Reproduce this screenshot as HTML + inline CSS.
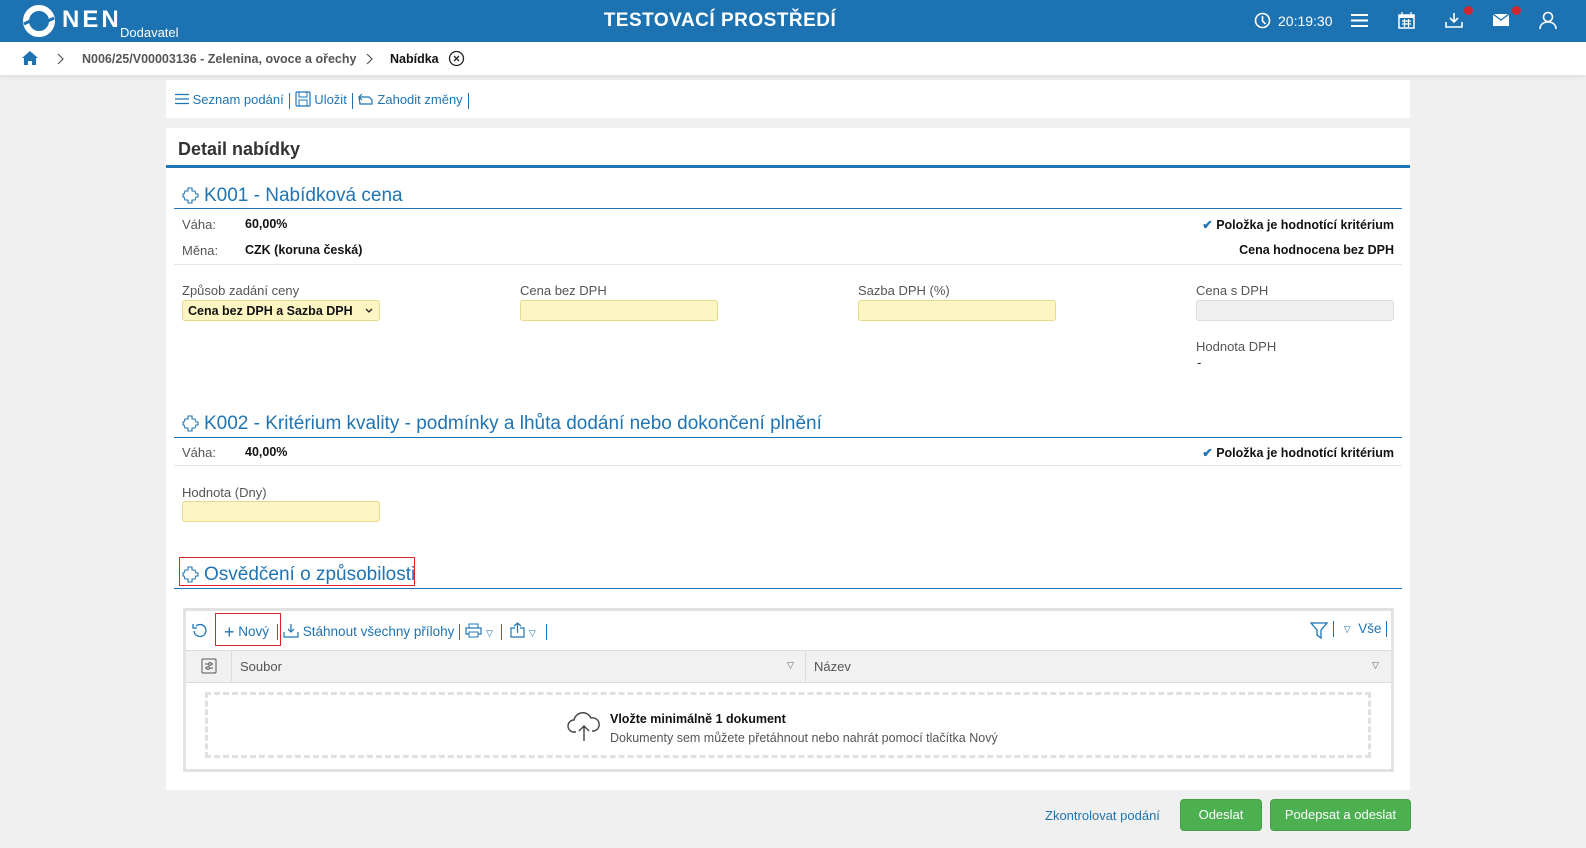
<!DOCTYPE html>
<html><head><meta charset="utf-8"><style>
*{box-sizing:border-box;margin:0;padding:0}
body{width:1586px;height:848px;background:#f0f0f0;font-family:"Liberation Sans",sans-serif;font-size:13px;color:#222;position:relative;overflow:hidden}
.a{position:absolute}
.blue{color:#1f74b3}
.lab{color:#555;font-size:13px}
.b{font-weight:bold;font-size:12.5px;color:#111}
.inp{position:absolute;height:21px;width:198px;background:#fdf6c3;border:1px solid #e6d98c;border-radius:3px}
.h2{position:absolute;color:#1f74b3;font-size:19px}
.hr{position:absolute;height:1px;background:#1f74b3}
.gl{position:absolute;height:1px;background:#e6e6e6}
.sep{display:inline-block;width:1px;height:16px;background:#1f74b3;vertical-align:middle;margin:0 5px}
</style></head><body>
<!-- header -->
<div class="a" style="left:0;top:0;width:1586px;height:42px;background:#1d73b2"></div>
<svg class="a" style="left:22px;top:4px" width="34" height="34" viewBox="0 0 34 34"><circle cx="17" cy="17" r="13" fill="none" stroke="#fff" stroke-width="6"/><path d="M2 20 L14 14 L20 20 L32 14" stroke="#1d73b2" stroke-width="3" fill="none"/></svg>
<div class="a" style="left:62px;top:6px;color:#fff;font-weight:bold;font-size:24px;letter-spacing:3px">NEN</div>
<div class="a" style="left:120px;top:25px;color:#fff;font-size:13px">Dodavatel</div>
<div class="a" style="left:0;width:1440px;top:10px;text-align:center;color:#fff;font-weight:bold;font-size:19px;letter-spacing:0.5px">TESTOVACÍ PROSTŘEDÍ</div>
<svg class="a" style="left:1254px;top:12px" width="17" height="17"><circle cx="8.5" cy="8.5" r="7" fill="none" stroke="#fff" stroke-width="1.6"/><path d="M8.5 4v5l3 3" stroke="#fff" stroke-width="1.6" fill="none"/></svg>
<div class="a" style="left:1278px;top:13px;color:#fff;font-size:14px">20:19:30</div>
<svg class="a" style="left:1351px;top:13px" width="17" height="15"><path d="M0 2h17M0 7.5h17M0 13h17" stroke="#fff" stroke-width="2"/></svg>
<svg class="a" style="left:1398px;top:12px" width="17" height="17"><rect x="1" y="3" width="15" height="13" fill="none" stroke="#fff" stroke-width="1.5"/><rect x="1" y="3" width="15" height="3" fill="#fff"/><path d="M4 0v4M13 0v4M4 9h9M4 12h9M6.5 7v8M10.5 7v8" stroke="#fff" stroke-width="1.2"/></svg>
<svg class="a" style="left:1445px;top:12px" width="18" height="17"><path d="M9 1v9M5 6l4 4 4-4M1 10v5h16v-5" stroke="#fff" stroke-width="1.6" fill="none"/></svg>
<div class="a" style="left:1464px;top:6px;width:9px;height:9px;border-radius:50%;background:#d0282d"></div>
<svg class="a" style="left:1492px;top:13px" width="18" height="14"><rect x="1" y="1" width="16" height="12" fill="#fff"/><path d="M1 1l8 6 8-6" stroke="#1d73b2" stroke-width="1.3" fill="none"/></svg>
<div class="a" style="left:1512px;top:6px;width:9px;height:9px;border-radius:50%;background:#d0282d"></div>
<svg class="a" style="left:1539px;top:11px" width="18" height="19"><circle cx="9" cy="6" r="4.5" fill="none" stroke="#fff" stroke-width="1.6"/><path d="M1 18c0-5 4-7 8-7s8 2 8 7" stroke="#fff" stroke-width="1.6" fill="none"/></svg>
<!-- breadcrumb -->
<div class="a" style="left:0;top:42px;width:1586px;height:33px;background:#fff;box-shadow:0 2px 4px rgba(0,0,0,.08)"></div>
<svg class="a" style="left:21px;top:50px" width="18" height="16"><path d="M9 1L1 8h2v7h4v-4h4v4h4V8h2z" fill="#1d73b2"/></svg>
<svg class="a" style="left:57px;top:53px" width="8" height="12"><path d="M1 1l5 5-5 5" stroke="#555" fill="none" stroke-width="1.2"/></svg>
<div class="a" style="left:82px;top:52px;font-weight:bold;font-size:12.5px;color:#555">N006/25/V00003136 - Zelenina, ovoce a ořechy</div>
<svg class="a" style="left:366px;top:53px" width="8" height="12"><path d="M1 1l5 5-5 5" stroke="#555" fill="none" stroke-width="1.2"/></svg>
<div class="a" style="left:390px;top:52px;font-weight:bold;font-size:12.5px;color:#111">Nabídka</div>
<svg class="a" style="left:448px;top:50px" width="17" height="17"><circle cx="8.5" cy="8.5" r="7" fill="none" stroke="#222" stroke-width="1.3"/><path d="M6 6l5 5M11 6l-5 5" stroke="#222" stroke-width="1.3"/></svg>
<!-- toolbar panel -->
<div class="a" style="left:166px;top:80px;width:1244px;height:38px;background:#fff"></div>
<div class="a blue" style="left:175px;top:91px;font-size:13px;white-space:nowrap">
<svg width="14" height="12" style="vertical-align:-1px"><path d="M0 1.5h14M0 6h14M0 10.5h14" stroke="#1f74b3" stroke-width="1.3"/></svg> Seznam podání<span class="sep"></span><svg width="16" height="16" style="vertical-align:-3px"><rect x="1" y="1" width="14" height="14" rx="1" fill="none" stroke="#1f74b3" stroke-width="1.2"/><rect x="4" y="1" width="8" height="5" fill="none" stroke="#1f74b3"/><rect x="4" y="9" width="8" height="6" fill="none" stroke="#1f74b3"/></svg> Uložit<span class="sep"></span><svg width="16" height="12" style="vertical-align:-1px"><path d="M1 4h10l3 3v4H2zM4 1L1 4l3 3" stroke="#1f74b3" fill="none" stroke-width="1.2"/></svg> Zahodit změny<span class="sep"></span></div>
<!-- main panel -->
<div class="a" style="left:166px;top:128px;width:1244px;height:662px;background:#fff"></div>
<div class="a" style="left:178px;top:139px;font-weight:bold;font-size:18px;color:#333">Detail nabídky</div>
<div class="a" style="left:166px;top:165px;width:1244px;height:3px;background:#1f74b3"></div>

<svg class="a" style="left:182px;top:187px" width="17" height="17" viewBox="0 0 17 17"><path d="M6 1h4v3h3l1 3h2v3h-2l-1 3h-3v3H6v-3H3l-1-3H1V7h1l1-3h3z" fill="none" stroke="#1f74b3" stroke-width="1.1"/></svg>
<div class="h2" style="left:204px;top:185px">K001 - Nabídková cena</div>
<div class="hr" style="left:174px;top:208px;width:1228px"></div>
<div class="a lab" style="left:182px;top:217px">Váha:</div><div class="a b" style="left:245px;top:217px">60,00%</div>
<div class="a b" style="right:192px;top:217px"><span class="blue">✔</span> Položka je hodnotící kritérium</div>
<div class="a lab" style="left:182px;top:243px">Měna:</div><div class="a b" style="left:245px;top:243px">CZK (koruna česká)</div>
<div class="a b" style="right:192px;top:243px">Cena hodnocena bez DPH</div>
<div class="gl" style="left:174px;top:264px;width:1228px"></div>
<div class="a lab" style="left:182px;top:283px">Způsob zadání ceny</div>
<div class="inp" style="left:182px;top:300px"><span class="b" style="position:absolute;left:5px;top:3px">Cena bez DPH a Sazba DPH</span><svg style="position:absolute;right:6px;top:7px" width="8" height="6"><path d="M1 1l3 3 3-3" stroke="#222" fill="none" stroke-width="1.3"/></svg></div>
<div class="a lab" style="left:520px;top:283px">Cena bez DPH</div><div class="inp" style="left:520px;top:300px"></div>
<div class="a lab" style="left:858px;top:283px">Sazba DPH (%)</div><div class="inp" style="left:858px;top:300px"></div>
<div class="a lab" style="left:1196px;top:283px">Cena s DPH</div><div class="inp" style="left:1196px;top:300px;background:#efefef;border-color:#ddd"></div>
<div class="a lab" style="left:1196px;top:339px">Hodnota DPH</div><div class="a" style="left:1197px;top:355px">-</div>

<svg class="a" style="left:182px;top:415px" width="17" height="17" viewBox="0 0 17 17"><path d="M6 1h4v3h3l1 3h2v3h-2l-1 3h-3v3H6v-3H3l-1-3H1V7h1l1-3h3z" fill="none" stroke="#1f74b3" stroke-width="1.1"/></svg>
<div class="h2" style="left:204px;top:413px">K002 - Kritérium kvality - podmínky a lhůta dodání nebo dokončení plnění</div>
<div class="hr" style="left:174px;top:437px;width:1228px"></div>
<div class="a lab" style="left:182px;top:445px">Váha:</div><div class="a b" style="left:245px;top:445px">40,00%</div>
<div class="a b" style="right:192px;top:445px"><span class="blue">✔</span> Položka je hodnotící kritérium</div>
<div class="gl" style="left:174px;top:465px;width:1228px"></div>
<div class="a lab" style="left:182px;top:485px">Hodnota (Dny)</div><div class="inp" style="left:182px;top:501px"></div>

<div class="a" style="left:179px;top:557px;width:236px;height:29px;border:1px solid #e0262c"></div>
<svg class="a" style="left:182px;top:566px" width="17" height="17" viewBox="0 0 17 17"><path d="M6 1h4v3h3l1 3h2v3h-2l-1 3h-3v3H6v-3H3l-1-3H1V7h1l1-3h3z" fill="none" stroke="#1f74b3" stroke-width="1.1"/></svg>
<div class="h2" style="left:204px;top:564px">Osvědčení o způsobilosti</div>
<div class="hr" style="left:174px;top:588px;width:1228px"></div>

<!-- grid -->
<div class="a" style="left:183px;top:608px;width:1211px;height:164px;border:3px solid #e2e2e2;background:#fff"></div>
<svg class="a" style="left:192px;top:622px" width="17" height="17"><path d="M4 4a6 6 0 1 1-2 5M1 2v4h4" stroke="#1f74b3" fill="none" stroke-width="1.3"/></svg>
<div class="a" style="left:215px;top:613px;width:66px;height:33px;border:1px solid #e0262c"></div>
<div class="a blue" style="left:224px;top:622px;font-size:13.5px;white-space:nowrap"><span style="font-size:18px;vertical-align:-2px">+</span> Nový<span class="sep" style="margin-left:8px"></span><svg width="16" height="15" style="vertical-align:-2px"><path d="M8 1v8M5 6l3 3 3-3M1 9v5h14V9" stroke="#1f74b3" fill="none" stroke-width="1.2"/></svg> Stáhnout všechny přílohy<span class="sep"></span><svg width="17" height="15" style="vertical-align:-2px"><rect x="1" y="5" width="15" height="6" fill="none" stroke="#1f74b3" stroke-width="1.2"/><rect x="4" y="1" width="9" height="4" fill="none" stroke="#1f74b3"/><rect x="4" y="9" width="9" height="5" fill="#fff" stroke="#1f74b3"/></svg> <span style="font-size:9px">▽</span><span class="sep" style="margin:0 8px"></span><svg width="15" height="16" style="vertical-align:-2px"><path d="M7.5 1v10M4 4l3.5-3 3.5 3M5 6H1v9h13V6h-4" stroke="#1f74b3" fill="none" stroke-width="1.2"/></svg> <span style="font-size:9px">▽</span><span class="sep" style="margin-left:10px"></span></div>
<svg class="a" style="left:1310px;top:622px" width="18" height="17"><path d="M1 1h16l-6 7v8l-4-3V8z" stroke="#1f74b3" fill="none" stroke-width="1.3"/></svg>
<div class="a blue" style="left:1333px;top:621px;font-size:13.5px;white-space:nowrap"><span class="sep" style="margin:0 6px 0 0"></span> <span style="font-size:9px;vertical-align:1px">▽</span>&nbsp; Vše<span class="sep" style="margin-left:5px"></span></div>
<div class="a" style="left:186px;top:650px;width:1205px;height:33px;background:#f1f1f1;border-top:1px solid #dcdcdc;border-bottom:1px solid #dcdcdc"></div>
<div class="a" style="left:231px;top:650px;width:1px;height:33px;background:#dcdcdc"></div>
<div class="a" style="left:805px;top:650px;width:1px;height:33px;background:#dcdcdc"></div>
<svg class="a" style="left:201px;top:658px" width="16" height="16"><rect x="1" y="1" width="14" height="14" rx="1" fill="none" stroke="#555"/><path d="M4 6h8M4 10h8" stroke="#555"/><circle cx="9" cy="6" r="1.4" fill="#fff" stroke="#555"/><circle cx="7" cy="10" r="1.4" fill="#fff" stroke="#555"/></svg>
<div class="a lab" style="left:240px;top:659px">Soubor</div>
<div class="a" style="left:787px;top:660px;font-size:9px;color:#666">▽</div>
<div class="a lab" style="left:814px;top:659px">Název</div>
<div class="a" style="left:1372px;top:660px;font-size:9px;color:#666">▽</div>
<div class="a" style="left:205px;top:692px;width:1166px;height:66px;border:3px dashed #e0e0e0"></div>
<svg class="a" style="left:567px;top:708px" width="34" height="34"><path d="M9 24H7a6 6 0 0 1 0-12 9 9 0 0 1 17-2 6 6 0 0 1 3 13h-2" stroke="#444" fill="none" stroke-width="1.4"/><path d="M17 33V18M12 23l5-5 5 5" stroke="#444" fill="none" stroke-width="1.4"/></svg>
<div class="a b" style="left:610px;top:712px">Vložte minimálně 1 dokument</div>
<div class="a" style="left:610px;top:731px;color:#555;font-size:12.5px">Dokumenty sem můžete přetáhnout nebo nahrát pomocí tlačítka Nový</div>

<!-- footer -->
<div class="a blue" style="left:1045px;top:808px;font-size:13px">Zkontrolovat podání</div>
<div class="a" style="left:1180px;top:799px;width:82px;height:32px;background:#4caf50;border:1px solid #43a047;border-radius:4px;color:#fff;text-align:center;line-height:30px;font-size:13px">Odeslat</div>
<div class="a" style="left:1270px;top:799px;width:141px;height:32px;background:#4caf50;border:1px solid #43a047;border-radius:4px;color:#fff;text-align:center;line-height:30px;font-size:13px">Podepsat a odeslat</div>
</body></html>
